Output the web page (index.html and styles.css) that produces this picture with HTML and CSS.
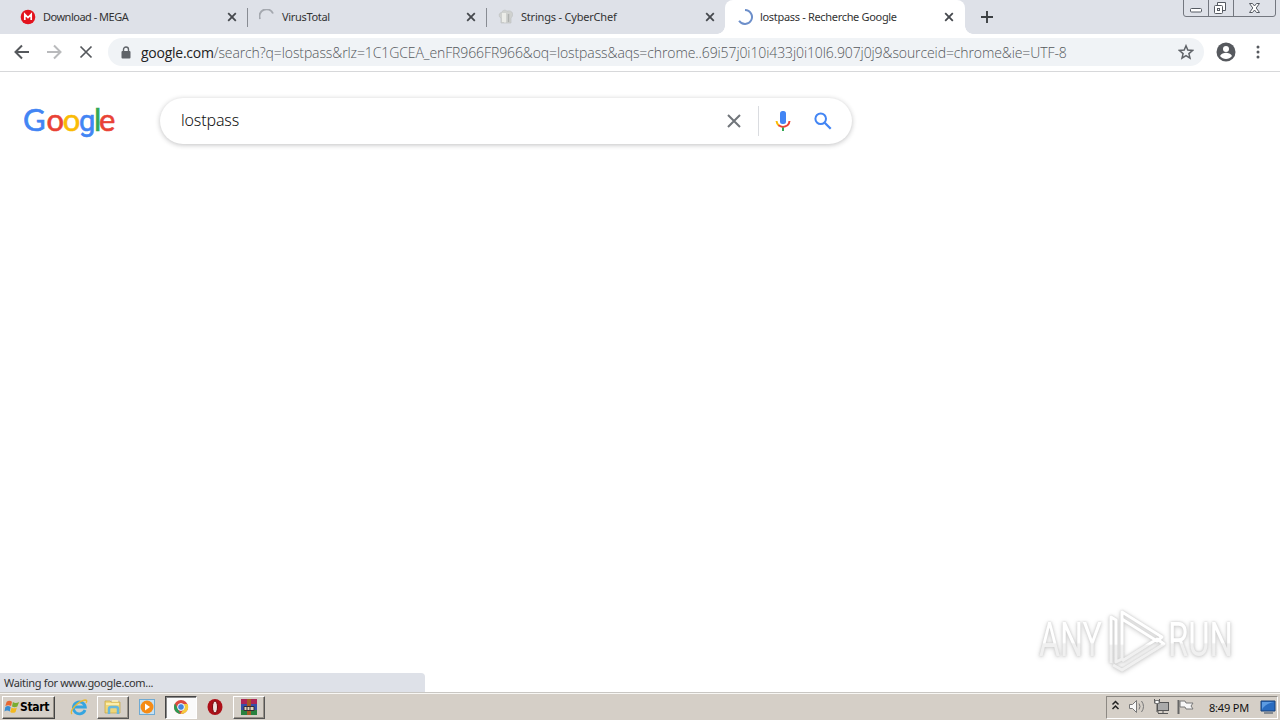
FILE: index.html
```
<!DOCTYPE html>
<html lang="fr">
<head>
    <meta charset="UTF-8">
    <meta name="viewport" content="width=device-width, initial-scale=1.0">
    <title>lostpass - Recherche Google</title>
    <link rel="stylesheet" href="styles.css">
</head>
<body>
    <header class="tabs">
        <div class="tab first">
            <svg class="favicon" viewBox="0 0 16 16"><circle cx="8" cy="8" r="7.3" fill="#e3131e"/><path d="M4.8 11V5.3L8 8.5l3.2-3.2V11" fill="none" stroke="#fff" stroke-width="1.7"/></svg>
            <span class="title t1">Download - MEGA</span>
            <svg class="close" viewBox="0 0 10 10"><path d="M1.2 1.2l7.6 7.6M8.8 1.2L1.2 8.8"/></svg>
        </div>
        <div class="tab">
            <svg class="favicon" viewBox="0 0 16 16"><path d="M1 10A7 7 0 0 1 14 4.500" fill="none" stroke="#a4a8af" stroke-width="1.9"/></svg>
            <span class="title t2">VirusTotal</span>
            <svg class="close" viewBox="0 0 10 10"><path d="M1.2 1.2l7.6 7.6M8.8 1.2L1.2 8.8"/></svg>
        </div>
        <div class="tab">
            <svg class="favicon" viewBox="0 0 16 16"><path d="M3 14V9C.5 8 .5 4 3.500 3.500 5 .5 8 .8 9 2.200c3-1 6 .5 5.500 3.500 0 2-1 2.600-1.500 3.300v5z" fill="#cfd1cf" stroke="#bfc2c2" stroke-width=".7"/><path d="M5 4v9M7 4v9.500" stroke="#f5f5f1" stroke-width="1.500"/><path d="M10.500 5v8" stroke="#aeb1af" stroke-width="1.500"/></svg>
            <span class="title t3">Strings - CyberChef</span>
            <svg class="close" viewBox="0 0 10 10"><path d="M1.2 1.2l7.6 7.6M8.8 1.2L1.2 8.8"/></svg>
        </div>
        <div class="tab active">
            <svg class="favicon" viewBox="0 0 16 16"><path d="M8 1A7 7 0 1 1 2.100 11.800" fill="none" stroke="#6d8fca" stroke-width="2"/></svg>
            <span class="title t4">lostpass - Recherche Google</span>
            <svg class="close" viewBox="0 0 10 10"><path d="M1.2 1.2l7.6 7.6M8.8 1.2L1.2 8.8"/></svg>
        </div>
        <svg class="new-tab" viewBox="0 0 12 12"><path d="M6 0v12M0 6h12" stroke="#3c4043" stroke-width="1.9"/></svg>
        <svg class="window-buttons" viewBox="0 0 94 17" fill="none" stroke="#73777f">
            <path d="M.5 0v14q0 2.500 2.500 2.500h87q2.500 0 2.500-2.500V0M25.500 0v16M50.500 0v16"/>
            <g stroke="#555a62">
            <rect x="7.500" y="8.500" width="11" height="3.500" rx="1" fill="#fff"/>
            <path d="M34.500 5V2.500h8v8H40" fill="#fff"/><rect x="31.500" y="5.500" width="8" height="8" rx="1" fill="#fff"/><rect x="34.500" y="8.500" width="2" height="2"/>
            <path d="M66.500 3.500h3l2 2.500 2-2.500h3l-3.300 4.500 3.300 4.500h-3l-2-2.500-2 2.500h-3L69.800 8z" fill="#fff"/>
            </g>
        </svg>
    </header>

    <nav class="toolbar">
        <svg class="nav-icons" viewBox="0 0 80 16" fill="none" stroke-width="2">
            <path d="M15 8H2M8 1.500L1.500 8 8 14.500" stroke="#55585c"/>
            <path d="M33 8h13M40 1.500L46.500 8 40 14.500" stroke="#b9babc"/>
            <path d="M66.500 2.500l11 11M77.500 2.500l-11 11" stroke="#55585c" stroke-width="1.7"/>
        </svg>
        <div class="address">
            <svg class="lock" viewBox="0 0 10 13"><path d="M2.500 6V3.500a2.500 2.500 0 0 1 5 0V6" fill="none" stroke="#5f6368" stroke-width="1.400"/><rect x=".5" y="5" width="9" height="7.500" rx="1" fill="#5f6368"/></svg>
            <span class="url"><b>google.com</b>/search?q=lostpass&amp;rlz=1C1GCEA_enFR966FR966&amp;oq=lostpass&amp;aqs=chrome..69i57j0i10i433j0i10l6.907j0j9&amp;sourceid=chrome&amp;ie=UTF-8</span>
            <svg class="star" viewBox="0 0 16 16"><path d="M8 1.800l1.800 4.300 4.700.4-3.600 3.100 1.100 4.600L8 11.700l-4 2.500 1.100-4.600-3.600-3.100 4.700-.4z" fill="none" stroke="#5f6368" stroke-width="1.500"/></svg>
        </div>
        <svg class="profile" viewBox="0 0 20 20"><circle cx="10" cy="10" r="9.500" fill="#56595e"/><circle cx="10" cy="7" r="3" fill="#fff"/><path d="M4 14c1-2.200 4-3.200 6-3.200s5 1 6 3.200c-3 4-9 4-12 0z" fill="#fff"/></svg>
        <svg class="menu" viewBox="0 0 4 14" fill="#56595e"><circle cx="2" cy="2" r="1.500"/><circle cx="2" cy="7" r="1.500"/><circle cx="2" cy="12" r="1.500"/></svg>
    </nav>

    <main class="page">
        <div class="search-row">
            <svg class="logo" viewBox="0 0 94 48"><text y="33"><tspan x="-1" fill="#4285f4" stroke="#4285f4">G</tspan><tspan x="22.500" fill="#e94235" stroke="#e94235">o</tspan><tspan x="38.700" fill="#fabb05" stroke="#fabb05">o</tspan><tspan class="g" x="55" fill="#4285f4" stroke="#4285f4">g</tspan><tspan x="70" fill="#34a853" stroke="#34a853">l</tspan><tspan x="75" fill="#e94235" stroke="#e94235">e</tspan></text></svg>
            <div class="search-box">
                <span class="query">lostpass</span>
                <svg class="clear" viewBox="0 0 14 14"><path d="M1 1l12 12M13 1L1 13" stroke="#70757a" stroke-width="2"/></svg>
                <span class="divider"></span>
                <svg class="mic" viewBox="0 0 16 22"><rect x="5" y="1" width="6" height="13" rx="2.500" fill="#4285f4"/><path d="M1.500 11q.3 3 2.500 4.700" stroke="#fbbc04" stroke-width="2" fill="none"/><path d="M3.500 15.300Q8 18.500 12.500 15.300 14.300 13.800 14.500 11" stroke="#ea4335" stroke-width="2" fill="none"/><path d="M8 17.500V21" stroke="#34a853" stroke-width="2"/></svg>
                <svg class="lens" viewBox="0 0 18 18"><circle cx="6.700" cy="6.700" r="5.300" fill="none" stroke="#4285f4" stroke-width="2"/><path d="M10.700 10.700l6 6" stroke="#4285f4" stroke-width="2.300"/></svg>
            </div>
        </div>

        <svg class="watermark" viewBox="0 0 204 72">
            <defs>
                <linearGradient id="fade" x1="0" y1="0" x2="0" y2="1"><stop offset=".55" stop-color="#fff"/><stop offset=".58" stop-color="#f0f0f0"/></linearGradient>
            </defs>
            <text x="7" y="51" textLength="63" lengthAdjust="spacingAndGlyphs">ANY</text>
            <path d="M79 58V12l5 3v42l6-3V7l40 25-5 4-35-22M90 56l35-22 7 5-42 26-9-5" fill="none" stroke="url(#fade)" stroke-width="3" stroke-linejoin="round"/>
            <text x="136" y="51" textLength="65" lengthAdjust="spacingAndGlyphs">RUN</text>
        </svg>
        <div class="status">Waiting for www.google.com...</div>
    </main>

    <footer class="taskbar">
        <button class="start">
            <svg viewBox="0 0 18 18"><path d="M3 3q3-2 6 0L8 8Q5 6 1.500 8z" fill="#e76832"/><path d="M10 3.500q3 2 7 0l-2 5q-3 1.500-6 0z" fill="#79ad32"/><path d="M1.500 9q3-2 6 0l-1 5q-3-2-6 0z" fill="#398dd1"/><path d="M8.500 9.500q3 2 6 0l-1.500 5q-3 2-6 0z" fill="#f3b91f"/></svg>
            <span>Start</span>
        </button>
        <div class="apps">
            <div class="app"><svg viewBox="0 0 18 18"><path d="M15 12A6 6 0 1 1 15.300 9H5" fill="none" stroke="#35a5e0" stroke-width="2.800"/><path d="M2 16C-1 13 8 3 15 2q3 0 1 3" fill="none" stroke="#e7b935" stroke-width="1.300"/></svg></div>
            <div class="app raised"><svg viewBox="0 0 18 18"><path d="M1 3h5l1 1h9v11H1z" fill="#efd678" stroke="#c5a544" stroke-width=".7"/><path d="M2 6h13M8 3h6" stroke="#fff5bc" stroke-width="1.500"/><path d="M5 16v-5q0-2 2-2h5q2 0 2 2v5" fill="none" stroke="#67b8dc" stroke-width="2.500"/></svg></div>
            <div class="app"><svg viewBox="0 0 18 18"><rect x="1.500" y="1.500" width="15" height="15" fill="#c5e1f4" stroke="#6faad3"/><circle cx="9" cy="9" r="6.500" fill="#f58b16"/><path d="M7 5.500v7l5-3.500z" fill="#fff"/></svg></div>
            <div class="app pressed"><svg viewBox="0 0 18 18"><circle cx="9" cy="9" r="7" fill="#dc4a3e"/><path d="M3 5.500L8.500 16A7 7 0 0 1 3 5.500z" fill="#299b54"/><path d="M9 6h6.500A7 7 0 0 1 8.500 16l3.500-6z" fill="#f5cb3d"/><circle cx="9" cy="9" r="3.400" fill="#4285df" stroke="#fff"/></svg></div>
            <div class="app"><svg viewBox="0 0 18 18"><ellipse cx="9" cy="9" rx="7.500" ry="8" fill="#ad1018"/><ellipse cx="9" cy="9" rx="2.500" ry="6" fill="#eee1dd" stroke="#71090d"/></svg></div>
            <div class="app raised"><svg viewBox="0 0 18 18"><path d="M1 1h16v5H1z" fill="#ad2456"/><path d="M1 6h16v6H1z" fill="#334faa"/><path d="M1 12h16v5H1z" fill="#28813f"/><path d="M7 1h4v16H7z" fill="#a65a24"/><path d="M4 8.500h10v4H4z" fill="#e0d5bc" stroke="#392b33"/><path d="M7 9v3M10 9v3" stroke="#392b33"/></svg></div>
        </div>
        <div class="tray">
            <svg class="tray-icons" viewBox="0 0 84 18" fill="none" stroke="#777">
                <path d="M1.500 6.500l3-3 3 3M1.500 11l3-3 3 3" stroke="#222" stroke-width="1.500"/>
                <path d="M18.500 6.500h3l4-4v12l-4-4h-3z" fill="#f7f7f7"/><path d="M28 5.500q2 3 0 6M30.500 3q4 5.500 0 11"/>
                <rect x="46.500" y="4.500" width="11" height="8" fill="#aaa" stroke="#555"/><path d="M47 15.500h10M52 13v2" stroke="#555"/><path d="M43.500 1v4h5V1M46 5v9h2" stroke="#555"/><path d="M44 2.500h4v3h-4z" fill="#fff"/>
                <path d="M67.500 2v14" stroke="#666" stroke-width="2"/><path d="M69 3h5l1 2h7l-2 3 2 3h-7l-1-2h-5z" fill="#f7f7f7"/>
            </svg>
            <span class="clock">8:49 PM</span>
            <svg class="desktop" viewBox="0 0 16 14"><path d="M1 1h14v10H1z" fill="#286bc0" stroke="#174179"/><path d="M2 10Q4 4 14 2H2z" fill="#5c9be2"/><path d="M4 13h9" stroke="#6a7580" stroke-width="1.500"/></svg>
        </div>
    </footer>
</body>
</html>
```
FILE: styles.css
```
* {
    box-sizing: border-box;
}

body {
    margin: 0;
    width: 1280px;
    height: 720px;
    overflow: hidden;
    display: flex;
    flex-direction: column;
    background: #fff;
    color: #333;
    font-family: "Noto Sans", sans-serif;
    font-size: 11px;
}

svg {
    display: block;
    flex: none;
}

.tabs {
    height: 34px;
    flex: none;
    display: flex;
    align-items: center;
    background: #dee1e8;
}

.tab {
    width: 239px;
    height: 34px;
    display: flex;
    align-items: center;
    padding: 0 11px;
    position: relative;
}

.tab.first {
    width: 248px;
    padding-left: 20px;
}

.tab:nth-child(-n+2)::after {
    content: "";
    position: absolute;
    right: 0;
    top: 8px;
    width: 1px;
    height: 19px;
    background: #888c93;
}

.tab.active {
    width: 240px;
    padding-left: 12px;
    background: #fff;
    border-radius: 8px 8px 0 0;
    margin-left: -1px;
}

.tab.active::before, .tab.active::after {
    content: "";
    position: absolute;
    bottom: 0;
    width: 8px;
    height: 8px;
}

.tab.active::before {
    left: -8px;
    background: radial-gradient(circle at 0 0, transparent 7.5px, #fff 8px);
}

.tab.active::after {
    right: -8px;
    background: radial-gradient(circle at 100% 0, transparent 7.5px, #fff 8px);
}

.favicon {
    width: 16px;
    height: 16px;
}

.title {
    flex: 1;
    margin-left: 7px;
    padding-bottom: 2px;
    white-space: nowrap;
}

.t1 {
    letter-spacing: -0.5px;
}

.t2, .t4 {
    letter-spacing: -0.32px;
}

.t3 {
    letter-spacing: -0.2px;
}

.close {
    width: 10px;
    height: 10px;
    stroke: #45484d;
    stroke-width: 1.8;
}

.new-tab {
    width: 12px;
    height: 12px;
    margin-left: 16px;
}

.window-buttons {
    width: 94px;
    height: 17px;
    margin-left: auto;
    margin-right: 3px;
    align-self: flex-start;
}

.toolbar {
    height: 38px;
    flex: none;
    display: flex;
    align-items: center;
    border-bottom: 1px solid #d7d8da;
    padding: 0 0 1px 14px;
}

.nav-icons {
    width: 80px;
    height: 16px;
}

.address {
    width: 1096px;
    height: 28px;
    margin-left: 14px;
    display: flex;
    align-items: center;
    padding: 0 10px 0 13px;
    border-radius: 14px;
    background: #f0f3f6;
}

.lock {
    width: 10px;
    height: 13px;
}

.url {
    flex: 1;
    margin-left: 10px;
    color: #55585c;
    font-family: "Open Sans", sans-serif;
    font-weight: 300;
    font-size: 14px;
    letter-spacing: -0.1px;
    white-space: nowrap;
}

.url b {
    color: #222;
    font-weight: 400;
    letter-spacing: -0.25px;
}

.star {
    width: 16px;
    height: 16px;
}

.profile {
    width: 20px;
    height: 20px;
    margin-left: 12px;
}

.menu {
    width: 4px;
    height: 14px;
    margin-left: 20px;
}

.page {
    flex: 1;
    position: relative;
    padding-top: 26px;
}

.search-row {
    display: flex;
}

.logo {
    width: 94px;
    height: 48px;
    margin-left: 24px;
}

.logo text {
    font: 31px Lato, sans-serif;
    stroke-width: 0.6px;
}

.logo .g {
    font: 29px Roboto, sans-serif;
}

.search-box {
    width: 692px;
    height: 46px;
    display: flex;
    align-items: center;
    margin-left: 42px;
    padding: 0 20px 0 21px;
    border-radius: 23px;
    box-shadow: 0 1px 5px rgba(32, 33, 36, 0.28);
}

.query {
    flex: 1;
    padding-bottom: 2px;
    color: #111;
    font-size: 16px;
    font-weight: 300;
    letter-spacing: -0.15px;
}

.clear {
    width: 14px;
    height: 14px;
}

.divider {
    width: 1px;
    height: 30px;
    margin: 0 16px 0 17px;
    background: #dadce0;
}

.mic {
    width: 16px;
    height: 22px;
    margin-right: 23px;
}

.lens {
    width: 18px;
    height: 18px;
}

/* overlays on the page */
.watermark {
    position: absolute;
    left: 1032px;
    top: 533px;
    width: 204px;
    height: 72px;
    filter: drop-shadow(0 0 1px #ccc) drop-shadow(0 1px 2px #d4d4d4);
}

.watermark text {
    fill: url(#fade);
    font: 49px Roboto, sans-serif;
}

.status {
    position: absolute;
    left: 0;
    bottom: 0;
    width: 425px;
    height: 19px;
    padding-left: 4px;
    line-height: 20px;
    letter-spacing: -0.32px;
    background: #dee1e8;
    border-top-right-radius: 4px;
}

.taskbar {
    height: 28px;
    flex: none;
    display: flex;
    align-items: center;
    padding: 2px 2px 1px;
    background: #d5cfc7;
    border-top: 1px solid #c9c7c3;
    box-shadow: inset 0 1px #f8f7f4;
}

.start {
    width: 53px;
    height: 23px;
    display: flex;
    align-items: center;
    padding: 0 1px;
    border: 1px solid;
    border-color: #fff #444 #444 #fff;
    box-shadow: inset -1px -1px #969087;
    background: #d5cfc7;
    color: #000;
    font: bold 12px "DejaVu Sans Condensed", "DejaVu Sans", sans-serif;
    letter-spacing: -0.3px;
}

.start svg {
    width: 16px;
    height: 18px;
}

.apps {
    display: flex;
    margin-left: 7px;
}

.app {
    width: 34px;
    height: 23px;
    display: flex;
    align-items: center;
    justify-content: center;
}

.app svg {
    width: 18px;
    height: 18px;
}

.raised {
    border: 1px solid;
    border-color: #fff #555 #555 #fff;
    box-shadow: inset -1px -1px #969087;
    width: 32px;
    margin: 0 1px;
}

.pressed {
    width: 32px;
    margin: 0 1px;
    border: 1px solid;
    border-color: #444 #fff #fff #444;
    box-shadow: inset 1px 1px #888;
    background: #fafafa;
}

.tray {
    width: 172px;
    height: 23px;
    margin-left: auto;
    display: flex;
    align-items: center;
    padding-left: 4px;
    border: 1px solid;
    border-color: #8d8983 #fff #fff #8d8983;
    color: #111;
}

.tray-icons {
    width: 84px;
    height: 18px;
}

.clock {
    margin-left: 14px;
    letter-spacing: -0.2px;
    white-space: nowrap;
}

.desktop {
    width: 16px;
    height: 14px;
    margin: 0 1px 0 auto;
}
```
